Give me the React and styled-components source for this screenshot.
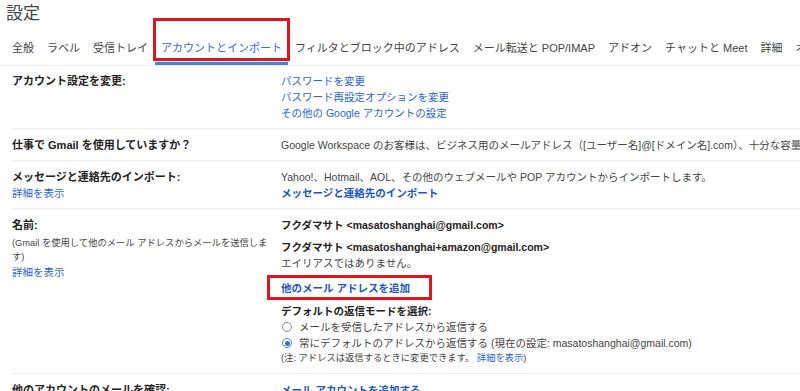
import styled, { createGlobalStyle, css } from "styled-components"

const GlobalStyle = createGlobalStyle`
  body {
    margin: 0;
    background: #ffffff;
    font-family: "Liberation Sans", "Noto Sans CJK JP", sans-serif;
    overflow: hidden;
  }
`

const tabs = [
  "全般",
  "ラベル",
  "受信トレイ",
  "アカウントとインポート",
  "フィルタとブロック中のアドレス",
  "メール転送と POP/IMAP",
  "アドオン",
  "チャットと Meet",
  "詳細",
  "オフライン",
]

export default function App() {
  return (
    <Page>
      <GlobalStyle />
      <Title>設定</Title>
      <TabBar>
        {tabs.map((t) => (
          <Tab key={t} $active={t === "アカウントとインポート"}>{t}</Tab>
        ))}
      </TabBar>
      <Settings>
        <Row>
          <Label>アカウント設定を変更:</Label>
          <Value>
            <Link>パスワードを変更</Link>
            <Link>パスワード再設定オプションを変更</Link>
            <Link>その他の Google アカウントの設定</Link>
          </Value>
        </Row>
        <Row>
          <Label>仕事で Gmail を使用していますか？</Label>
          <Value>
            <Text>Google Workspace のお客様は、ビジネス用のメールアドレス（[ユーザー名]@[ドメイン名].com）、十分な容量のストレージ、管理ツールなどをご利用いただけます。</Text>
          </Value>
        </Row>
        <Row>
          <div>
            <Label>メッセージと連絡先のインポート:</Label>
            <Link>詳細を表示</Link>
          </div>
          <Value>
            <Text>Yahoo!、Hotmail、AOL、その他のウェブメールや POP アカウントからインポートします。</Text>
            <Link $bold>メッセージと連絡先のインポート</Link>
          </Value>
        </Row>
        <Row>
          <div>
            <Label>名前:</Label>
            <SideNote>(Gmail を使用して他のメール アドレスからメールを送信します)</SideNote>
            <Link>詳細を表示</Link>
          </div>
          <Value>
            <Sender>フクダマサト &lt;masatoshanghai@gmail.com&gt;</Sender>
            <Sender $gap>フクダマサト &lt;masatoshanghai+amazon@gmail.com&gt;</Sender>
            <Text>エイリアスではありません。</Text>
            <Marked>
              <Link $bold>他のメール アドレスを追加</Link>
            </Marked>
            <SubHead>デフォルトの返信モードを選択:</SubHead>
            <RadioLine>
              <Radio />
              メールを受信したアドレスから返信する
            </RadioLine>
            <RadioLine>
              <Radio $checked />
              常にデフォルトのアドレスから返信する (現在の設定: masatoshanghai@gmail.com)
            </RadioLine>
            <Note>
              (注: アドレスは返信するときに変更できます。 <InlineLink>詳細を表示</InlineLink>)
            </Note>
          </Value>
        </Row>
        <Row>
          <Label>他のアカウントのメールを確認:</Label>
          <Value>
            <Link $bold>メール アカウントを追加する</Link>
          </Value>
        </Row>
      </Settings>
    </Page>
  )
}

const Page = styled.div`
  width: 800px;
  height: 391px;
  overflow: hidden;
  background: #ffffff;
`

const Title = styled.h1`
  margin: 0;
  padding: 2px 0 0 6px;
  font-size: 17px;
  line-height: 24px;
  font-weight: 400;
  color: #444444;
`

const TabBar = styled.nav`
  display: flex;
  gap: 1px;
  padding-left: 6px;
  border-bottom: 1px solid #eeeeee;
  white-space: nowrap;
`

const Tab = styled.div`
  position: relative;
  flex: none;
  padding: 14px 6px 6px;
  font-size: 11px;
  line-height: 16px;
  color: #444444;
  border-bottom: 3px solid transparent;
  ${(p) =>
    p.$active &&
    css`
      color: #2f6fd8;
      border-bottom-color: #4a7fdc;
      &::after {
        content: "";
        position: absolute;
        top: -8px;
        bottom: 1px;
        left: -2px;
        right: -2px;
        border: 3px solid #e0141f;
      }
    `}
`

const Settings = styled.div`
  padding-left: 12px;
`

const Row = styled.section`
  display: grid;
  grid-template-columns: 269px 1fr;
  padding: 7px 0 7px;
  border-bottom: 1px solid #eeeeee;
  white-space: nowrap;
  & + & {
    padding-top: 8px;
  }
`

const Label = styled.div`
  font-size: 11px;
  line-height: 16px;
  font-weight: 700;
  color: #222222;
`

const SideNote = styled.div`
  max-width: 260px;
  margin-top: 3px;
  font-size: 9.3px;
  line-height: 14px;
  color: #444444;
  white-space: normal;
`

const Value = styled.div`
  display: flex;
  flex-direction: column;
  align-items: flex-start;
  min-width: 0;
`

const Text = styled.div`
  font-size: 10.5px;
  line-height: 16px;
  color: #444444;
`

const Link = styled.a`
  display: block;
  font-size: 10.5px;
  line-height: 16px;
  color: ${(p) => (p.$bold ? "#1a56c6" : "#2b66d4")};
  font-weight: ${(p) => (p.$bold ? 700 : 400)};
  cursor: pointer;
`

const Sender = styled.div`
  margin-top: ${(p) => (p.$gap ? "6px" : "0")};
  font-size: 10.5px;
  line-height: 16px;
  font-weight: 700;
  color: #222222;
`

const Marked = styled.div`
  margin: 4px 0 0 -14px;
  padding: 2px 19px 1px 11px;
  border: 3px solid #e0141f;
`

const SubHead = styled.div`
  margin-top: 3px;
  font-size: 10.5px;
  line-height: 16px;
  font-weight: 700;
  color: #222222;
`

const RadioLine = styled.div`
  display: flex;
  align-items: center;
  gap: 7px;
  font-size: 10.5px;
  line-height: 16px;
  color: #444444;
`

const Radio = styled.span`
  position: relative;
  box-sizing: border-box;
  width: 10px;
  height: 10px;
  margin-left: 1px;
  border-radius: 50%;
  border: 1px solid ${(p) => (p.$checked ? "#4a86e8" : "#8a8a8a")};
  background: #ffffff;
  ${(p) =>
    p.$checked &&
    css`
      &::after {
        content: "";
        position: absolute;
        inset: 1.5px;
        border-radius: 50%;
        background: #2a6fe0;
      }
    `}
`

const Note = styled.div`
  margin-bottom: 1px;
  font-size: 9.3px;
  line-height: 14px;
  color: #444444;
`

const InlineLink = styled.a`
  color: #2b66d4;
  cursor: pointer;
`
